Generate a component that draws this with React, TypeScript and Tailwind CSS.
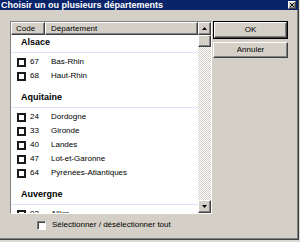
import React from "react";

// ─── Data ────────────────────────────────────────────────────────────────────

interface Dept {
  code: string;
  name: string;
}

interface Region {
  name: string;
  depts: Dept[];
}

const regions: Region[] = [
  {
    name: "Alsace",
    depts: [
      { code: "67", name: "Bas-Rhin" },
      { code: "68", name: "Haut-Rhin" },
    ],
  },
  {
    name: "Aquitaine",
    depts: [
      { code: "24", name: "Dordogne" },
      { code: "33", name: "Gironde" },
      { code: "40", name: "Landes" },
      { code: "47", name: "Lot-et-Garonne" },
      { code: "64", name: "Pyrénées-Atlantiques" },
    ],
  },
  {
    name: "Auvergne",
    depts: [{ code: "03", name: "Allier" }],
  },
];

const font = { fontFamily: '"Liberation Sans", Arial, sans-serif' };

// ─── Small pieces ────────────────────────────────────────────────────────────

const raised =
  "bg-[#d4d0c8] border border-t-white border-l-white border-r-[#404040] border-b-[#404040] shadow-[inset_-1px_-1px_0_#808080]";

function Arrow({ down }: { down?: boolean }) {
  return (
    <svg width="5" height="3" viewBox="0 0 5 3">
      <path d={down ? "M0 0h5L2.5 3z" : "M0 3h5L2.5 0z"} fill="#000" />
    </svg>
  );
}

function Scrollbar() {
  return (
    <div className="flex w-[13px] shrink-0 flex-col">
      <div className={`flex h-[13px] items-center justify-center ${raised}`}>
        <Arrow />
      </div>
      <div className={`h-[12px] ${raised}`} />
      <div className="flex-1 bg-[repeating-conic-gradient(#d4d0c8_0_25%,#ffffff_0_50%)] bg-[length:2px_2px]" />
      <div className={`flex h-[13px] items-center justify-center ${raised}`}>
        <Arrow down />
      </div>
    </div>
  );
}

function RegionGroup({ region }: { region: Region }) {
  return (
    <div>
      <div className="h-[18px] border-b border-[#dde5f8] pt-[1px] pl-[10px] text-[9px] font-bold leading-[12px] text-black">
        {region.name}
      </div>
      <div className="pt-[2px] pb-[7px]">
        {region.depts.map((d) => (
          <div key={d.code} className="flex h-[14px] items-center text-[8px] text-black">
            <span className="ml-[6px] h-[9px] w-[9px] shrink-0 border-2 border-[#1a1a1a] bg-white" />
            <span className="ml-[4px] w-[21px] shrink-0">{d.code}</span>
            <span>{d.name}</span>
          </div>
        ))}
      </div>
    </div>
  );
}

// ─── Dialog ──────────────────────────────────────────────────────────────────

export default function App() {
  return (
    <div className="h-[242px] w-[300px] overflow-hidden bg-[#dcdad5]" style={font}>
      <div className="flex h-[240px] w-[299px] flex-col border-r border-b border-[#404040] bg-[#d4d0c8] shadow-[inset_-1px_-1px_0_#808080]">
        {/* title bar */}
        <div className="flex h-[10px] items-center justify-between bg-[#0a246a] pr-[2px]">
          <span className="pl-[1px] text-[9px] font-bold leading-[10px] text-white">
            Choisir un ou plusieurs départements
          </span>
          <div className={`flex h-[8px] w-[8px] items-center justify-center ${raised}`}>
            <svg width="4" height="4" viewBox="0 0 4 4">
              <path d="M0 0l4 4M4 0L0 4" stroke="#000" strokeWidth="1" />
            </svg>
          </div>
        </div>

        <div className="flex pt-[11px] pl-[10px]">
          {/* list */}
          <div className="flex h-[193px] w-[202px] border border-t-[#808080] border-l-[#808080] border-r-white border-b-white bg-white">
            <div className="flex min-w-0 flex-1 flex-col overflow-hidden">
              <div className="flex h-[13px] shrink-0 text-[8px] leading-[11px] text-black">
                <div className={`w-[34px] shrink-0 pl-[4px] ${raised}`}>Code</div>
                <div className={`flex-1 pl-[5px] ${raised}`}>Département</div>
              </div>
              <div className="flex-1 overflow-hidden">
                {regions.map((r) => (
                  <RegionGroup key={r.name} region={r} />
                ))}
              </div>
            </div>
            <Scrollbar />
          </div>

          {/* buttons */}
          <div className="ml-[1px] flex flex-col gap-[3px]">
            <div className="h-[18px] w-[75px] border border-black">
              <div className={`flex h-full items-center justify-center text-[8px] text-black ${raised}`}>OK</div>
            </div>
            <div className={`flex h-[16px] w-[75px] items-center justify-center text-[8px] text-black ${raised}`}>
              Annuler
            </div>
          </div>
        </div>

        {/* select all */}
        <div className="mt-[6px] flex items-center pl-[37px]">
          <span className="h-[9px] w-[9px] border border-t-[#808080] border-l-[#808080] border-r-white border-b-white bg-white shadow-[inset_1px_1px_0_#404040]" />
          <span className="ml-[6px] text-[8px] leading-[10px] text-black">Sélectionner / désélectionner tout</span>
        </div>
      </div>
    </div>
  );
}
